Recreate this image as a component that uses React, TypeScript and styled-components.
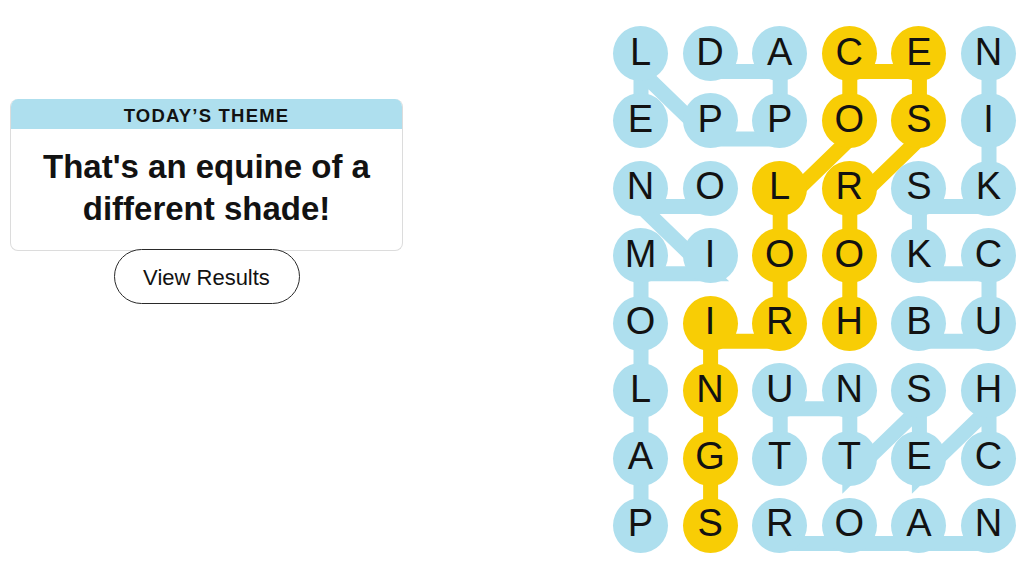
import React from 'react'
import styled, { createGlobalStyle } from 'styled-components'

const GlobalStyle = createGlobalStyle`
  html, body {
    margin: 0;
    padding: 0;
    background: #fff;
  }
  body {
    font-family: 'Liberation Sans', Arial, sans-serif;
    color: #121212;
  }
`

const BLUE = '#aedfee'
const YELLOW = '#f8cd05'

const CELL = 55
const COL_STEP = 69.6
const ROW_STEP = 67.43
// the connector lines sit a little lower than the circle centres
const LINE_DX = 0.5
const LINE_DY = 18

const letters = [
  'LDACEN',
  'EPPOSI',
  'NOLRSK',
  'MIOOKC',
  'OIRHBU',
  'LNUNSH',
  'AGTTEC',
  'PSROAN',
]

type Cell = [number, number]

const words: Cell[][] = [
  // DAPPLE
  [[0, 1], [0, 2], [1, 2], [1, 1], [0, 0], [1, 0]],
  // BUCKSKIN
  [[4, 4], [4, 5], [3, 5], [3, 4], [2, 4], [2, 5], [1, 5], [0, 5]],
  // PALOMINO
  [[7, 0], [6, 0], [5, 0], [4, 0], [3, 0], [3, 1], [2, 0], [2, 1]],
  // CHESTNUT
  [[6, 5], [5, 5], [6, 4], [5, 4], [6, 3], [5, 3], [5, 2], [6, 2]],
  // ROAN
  [[7, 2], [7, 3], [7, 4], [7, 5]],
]

const spangram: Cell[] = [
  [4, 3], [3, 3], [2, 3], [1, 4], [0, 4], [0, 3], [1, 3],
  [2, 2], [3, 2], [4, 2], [4, 1], [5, 1], [6, 1], [7, 1],
]

const isSpangram = (r: number, c: number) =>
  spangram.some(([sr, sc]) => sr === r && sc === c)

const toPoints = (path: Cell[]) =>
  path
    .map(
      ([r, c]) =>
        `${(CELL / 2 + c * COL_STEP + LINE_DX).toFixed(1)},${(
          CELL / 2 +
          r * ROW_STEP +
          LINE_DY
        ).toFixed(1)}`
    )
    .join(' ')

const Page = styled.main`
  display: flex;
  justify-content: space-between;
  align-items: flex-start;
  padding: 26px 8px 0 10px;
  height: 576px;
  box-sizing: border-box;
`

const ThemePanel = styled.section`
  width: 393px;
  margin-top: 73px;
  display: flex;
  flex-direction: column;
  align-items: center;
`

const ThemeCard = styled.div`
  width: 100%;
  box-sizing: border-box;
  border: 1px solid #dcdcdc;
  border-top: none;
  border-radius: 8px;
  overflow: hidden;
  background: #fff;
`

const ThemeHeader = styled.h2`
  margin: 0;
  height: 30px;
  line-height: 34px;
  overflow: hidden;
  background: ${BLUE};
  text-align: center;
  font-size: 18.5px;
  font-weight: 700;
  letter-spacing: 1.2px;
  text-transform: uppercase;
  color: #121212;
`

const ThemeText = styled.h1`
  margin: 0;
  padding: 17px 20px 20px;
  text-align: center;
  font-size: 33px;
  line-height: 42px;
  font-weight: 700;
  color: #121212;
`

const ResultsButton = styled.button`
  position: relative;
  margin-top: -2px;
  width: 186px;
  height: 55px;
  padding: 2px 0 0;
  border: 1px solid #2a2a2a;
  border-radius: 28px;
  background: #fff;
  font-family: 'Liberation Sans', Arial, sans-serif;
  font-size: 22px;
  color: #121212;
  cursor: pointer;
`

const Board = styled.div`
  position: relative;
  width: 403px;
  display: grid;
  grid-template-columns: repeat(6, ${CELL}px);
  grid-auto-rows: ${CELL}px;
  column-gap: ${COL_STEP - CELL}px;
  row-gap: ${ROW_STEP - CELL}px;
`

const Strands = styled.svg`
  position: absolute;
  top: 0;
  left: 0;
  width: 403px;
  height: 527px;
  overflow: visible;
  pointer-events: none;
`

const Letter = styled.div<{ $spangram: boolean }>`
  position: relative;
  z-index: 1;
  width: ${CELL}px;
  height: ${CELL}px;
  border-radius: 50%;
  background: ${props => (props.$spangram ? YELLOW : BLUE)};
  display: flex;
  align-items: center;
  justify-content: center;
  padding-bottom: 3px;
  box-sizing: border-box;
  font-size: 38px;
  color: #121212;
  user-select: none;
`

export default function App() {
  return (
    <>
      <GlobalStyle />
      <Page>
        <ThemePanel>
          <ThemeCard>
            <ThemeHeader>Today’s Theme</ThemeHeader>
            <ThemeText>That's an equine of a different shade!</ThemeText>
          </ThemeCard>
          <ResultsButton>View Results</ResultsButton>
        </ThemePanel>

        <Board>
          <Strands viewBox="0 0 403 527">
            {words.map((path, i) => (
              <polyline
                key={i}
                points={toPoints(path)}
                fill="none"
                stroke={BLUE}
                strokeWidth={15}
              />
            ))}
            <polyline
              points={toPoints(spangram)}
              fill="none"
              stroke={YELLOW}
              strokeWidth={15}
            />
          </Strands>
          {letters.map((row, r) =>
            row
              .split('')
              .map((ch, c) => (
                <Letter key={`${r}-${c}`} $spangram={isSpangram(r, c)}>
                  {ch}
                </Letter>
              ))
          )}
        </Board>
      </Page>
    </>
  )
}
